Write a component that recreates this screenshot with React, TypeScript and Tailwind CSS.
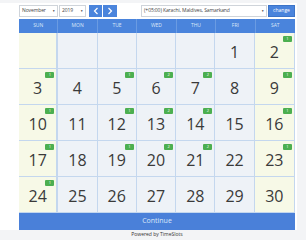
const days = ["SUN", "MON", "TUE", "WED", "THU", "FRI", "SAT"];

type Cell = { d?: number; badge?: string };

const weeks: Cell[][] = [
  [{}, {}, {}, {}, {}, { d: 1 }, { d: 2, badge: "1" }],
  [
    { d: 3, badge: "1" },
    { d: 4 },
    { d: 5, badge: "1" },
    { d: 6, badge: "2" },
    { d: 7, badge: "2" },
    { d: 8 },
    { d: 9, badge: "1" },
  ],
  [
    { d: 10, badge: "1" },
    { d: 11 },
    { d: 12, badge: "1" },
    { d: 13, badge: "2" },
    { d: 14, badge: "2" },
    { d: 15 },
    { d: 16, badge: "1" },
  ],
  [
    { d: 17, badge: "1" },
    { d: 18 },
    { d: 19, badge: "1" },
    { d: 20, badge: "2" },
    { d: 21, badge: "2" },
    { d: 22 },
    { d: 23, badge: "1" },
  ],
  [
    { d: 24, badge: "1" },
    { d: 25 },
    { d: 26 },
    { d: 27 },
    { d: 28 },
    { d: 29 },
    { d: 30 },
  ],
];

function FakeSelect({ label, className }: { label: string; className: string }) {
  return (
    <div
      className={`h-[12px] flex items-center justify-between border border-[#cfd4da] bg-white pl-[2px] pr-[2px] text-[5px] tracking-[-0.1px] text-[#444] whitespace-nowrap ${className}`}
    >
      <span>{label}</span>
      <span className="text-[3px] text-[#333] ml-[1px]">▼</span>
    </div>
  );
}

export default function App() {
  return (
    <div
      className="w-[306px] h-[240px] bg-[#f3f4f6] overflow-hidden"
      style={{ fontFamily: "'Open Sans', 'Liberation Sans', sans-serif" }}
    >
      <div className="mt-[3px] w-[297px] h-[227px] bg-white pl-[19px] pt-[2px]">
        <div className="flex items-center w-[276px] h-[12px]">
          <FakeSelect label="November" className="w-[39px]" />
          <FakeSelect label="2019" className="w-[27px] ml-[1px]" />
          <div className="ml-[3px] w-[13px] h-[12px] bg-[#4a84dc] flex items-center justify-center">
            <svg width="6" height="8" viewBox="0 0 6 8">
              <path d="M4.5 1 L1.5 4 L4.5 7" stroke="white" strokeWidth="1.2" fill="none" />
            </svg>
          </div>
          <div className="ml-[1px] w-[14px] h-[12px] bg-[#4a84dc] flex items-center justify-center">
            <svg width="6" height="8" viewBox="0 0 6 8">
              <path d="M1.5 1 L4.5 4 L1.5 7" stroke="white" strokeWidth="1.2" fill="none" />
            </svg>
          </div>
          <FakeSelect label="(+05:00) Karachi, Maldives, Samarkand" className="w-[126px] ml-[24px]" />
          <div className="ml-[1px] w-[27px] h-[12px] bg-[#4a84dc] border border-[#3c74c8] text-white text-[5px] flex items-center justify-center">
            change
          </div>
        </div>

        <div className="mt-[2px] w-[276px] grid grid-cols-7 h-[14px] bg-[#4a84dc]">
          {days.map((d) => (
            <div
              key={d}
              className="flex items-center justify-center text-[5px] text-[#dbe7f8] border-r border-[#6a9be2] last:border-r-0"
            >
              {d}
            </div>
          ))}
        </div>

        <div className="w-[276px] border-r border-[#c4d7ee]">
          {weeks.map((w, i) => (
            <div key={i} className="grid grid-cols-7 h-[36px] border-b border-[#c4d7ee]">
              {w.map((c, j) => {
                const weekend = j === 0 || j === 6;
                return (
                  <div
                    key={j}
                    className={`relative flex items-center justify-center pt-[3px] text-[16px] text-[#3a3a3a] ${
                      weekend ? "bg-[#f7f9e7]" : "bg-[#eef2f7]"
                    } ${j === 0 ? "border-r-2" : "border-r"} border-[#c4d7ee] last:border-r-0`}
                  >
                    {c.badge && (
                      <span className="absolute top-[3px] right-[2px] w-[9px] h-[6px] rounded-[1px] bg-[#4caf50] text-white text-[4px] leading-[6px] text-center">
                        {c.badge}
                      </span>
                    )}
                    {c.d}
                  </div>
                );
              })}
            </div>
          ))}
        </div>

        <div className="w-[276px] h-[17px] bg-[#4a80d9] flex items-center justify-center text-[7px] text-[#dce8fa]">
          Continue
        </div>
      </div>
      <div className="w-[297px] text-center text-[5px] text-[#333] mt-[1px] pl-[19px]">
        <div className="w-[276px]">Powered by TimeSlots</div>
      </div>
    </div>
  );
}
